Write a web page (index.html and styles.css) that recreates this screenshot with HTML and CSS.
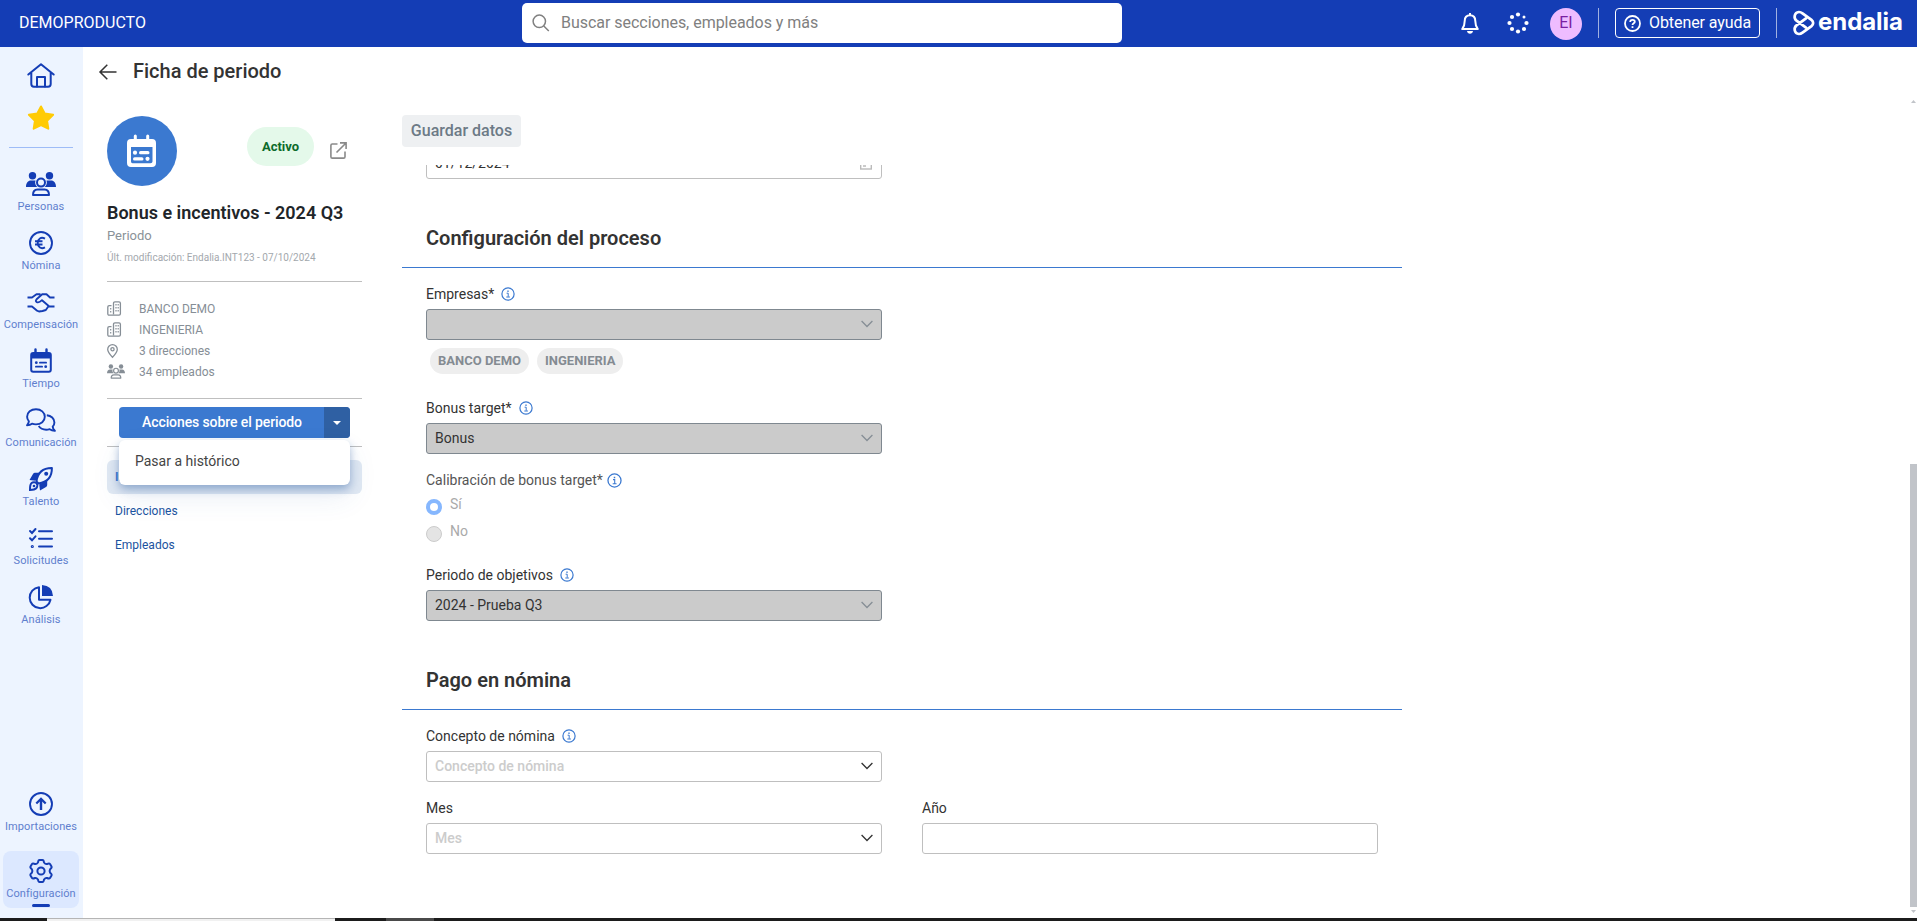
FILE: index.html
```html
<!DOCTYPE html>
<html lang="es">
<head>
<meta charset="utf-8">
<title>Ficha de periodo</title>
<link rel="stylesheet" href="styles.css">
</head>
<body>
<svg width="0" height="0" class="defs">
  <symbol id="people" viewBox="0 0 30 24">
    <circle cx="6.5" cy="3.8" r="3.7" fill="currentColor"/><circle cx="23.5" cy="3.8" r="3.7" fill="currentColor"/>
    <path d="M0 15c0-4 2-6.500 5-6.500h4.500c-1 3 .2 5 1.800 6.500zM30 15c0-4-2-6.500-5-6.500h-4.500c1 3-.2 5-1.800 6.500z" fill="currentColor"/>
    <circle cx="15" cy="10.600" r="4" fill="none" stroke="currentColor" stroke-width="2"/>
    <path d="M7 23c0-3.600 1.800-5.500 4.500-5.500h7c2.700 0 4.500 1.900 4.500 5.500z" fill="none" stroke="currentColor" stroke-width="2" stroke-linejoin="round"/>
  </symbol>
  <symbol id="building" viewBox="0 0 15 15">
    <path d="M6.500 13.200V2.200Q6.500.8 8 .8h4Q13.400.8 13.400 2.200v10.600q0 1.400-1.400 1.400H2.200Q.8 14.200.8 12.800V6q0-1.400 1.400-1.400h2.300" fill="none" stroke="currentColor" stroke-width="1.300"/>
    <path d="M9 3v9M11.200 3v9M3.700 7v5" stroke="currentColor" stroke-width="1.200" stroke-dasharray="1.500 1.500"/>
  </symbol>
  <symbol id="info" viewBox="0 0 14 14">
    <circle cx="7" cy="7" r="6.100" fill="none" stroke="currentColor" stroke-width="1.200"/>
    <path d="M5.600 6.200h1.600v3.500M5.300 10h3.600" fill="none" stroke="currentColor" stroke-width="1"/><rect x="6.300" y="3.500" width="1.400" height="1.400" fill="currentColor"/>
  </symbol>
  <symbol id="chevron" viewBox="0 0 12 8"><path d="M.6 1 6 6.500 11.400 1" fill="none" stroke="currentColor" stroke-width="1.300"/></symbol>
</svg>

<header class="topbar">
  <div class="tenant">DEMOPRODUCTO</div>
  <div class="search">
    <svg width="18" height="18" viewBox="0 0 18 18" fill="none" stroke="#808080" stroke-width="1.500"><circle cx="7.300" cy="7.300" r="6.200"/><path d="m11.800 12 5 5"/></svg>
    <span>Buscar secciones, empleados y más</span>
  </div>
  <div class="tools">
    <svg class="bell" width="18" height="21" viewBox="0 0 18 21" fill="none" stroke="#fff" stroke-width="2" stroke-linejoin="round"><path d="M9 2.300c-3.500 0-5.300 2.500-5.300 5.700C3.700 12 2.800 14 1.200 16h15.600c-1.600-2-2.500-4-2.500-8 0-3.200-1.800-5.700-5.300-5.700zM9 0v2.500"/><path d="M6 18h6c-.3 1.700-1.400 2.700-3 2.700S6.300 19.700 6 18z" fill="#fff" stroke="none"/></svg>
    <svg class="spin" width="22" height="22" viewBox="0 0 22 22" fill="#fff"><circle cx="11" cy="2.500" r="2.100"/><circle cx="17" cy="5" r="1.500"/><circle cx="19.500" cy="11" r="2.100"/><circle cx="17" cy="17" r="2.100"/><circle cx="11" cy="19.500" r="2.100"/><circle cx="5" cy="17" r="2.100"/><circle cx="2.500" cy="11" r="2.100"/><circle cx="5" cy="5" r="2.100"/></svg>
    <div class="avatar">EI</div>
    <i class="sep"></i>
    <div class="help">
      <svg width="17" height="17" viewBox="0 0 17 17" fill="none" stroke="#fff" stroke-width="1.800"><circle cx="8.500" cy="8.500" r="7.500"/><path d="M6.200 6.900c0-1.400 1-2.100 2.300-2.100s2.300.8 2.300 1.900c0 1.500-2.300 1.500-2.300 3.200"/><path d="M8.500 11.200V13"/></svg>
      <span>Obtener ayuda</span>
    </div>
    <i class="sep"></i>
    <div class="brand">
      <svg width="22" height="26" viewBox="0 0 22 26" fill="none" stroke="#fff" stroke-width="2.700" stroke-linejoin="round" stroke-linecap="round"><path d="M13 17.700 3.500 10.600C.3 8 1.300 2.300 5.800 2c1.500-.1 2.500.4 3.700 1.300l9 6.600c2.200 1.700 2.200 4.500 0 6.200l-9 6.600c-1.200.9-2.200 1.400-3.700 1.300-4.500-.3-5.500-6-2.300-8.600L13 8.300"/></svg>
      <span>endalia</span>
    </div>
  </div>
</header>

<div class="body">
  <nav class="rail">
    <svg class="home" width="28" height="25" viewBox="0 0 28 25" fill="none" stroke="currentColor" stroke-width="2" stroke-linejoin="round" stroke-linecap="round"><path d="M1.300 11.500 14 1.200l12.700 10.300M4.300 10v11q0 2.700 2.700 2.700h14q2.700 0 2.700-2.700V10"/><path d="M10 23.500V14h8v9.500"/></svg>
    <svg class="star" width="28" height="25" viewBox="0 0 28 25"><path d="M14 1.500 17.700 8.500l8.400 1.300-6 6 1.200 7.900L14 20l-7.300 3.700 1.200-7.900-6-6 8.400-1.300z" fill="#ffcb05" stroke="#ffcb05" stroke-width="2" stroke-linejoin="round"/></svg>
    <hr>
    <div class="nav"><svg width="30" height="24"><use href="#people"/></svg><span>Personas</span></div>
    <div class="nav"><svg width="24" height="24" viewBox="0 0 24 24" fill="none" stroke="currentColor" stroke-width="1.900"><circle cx="12" cy="12" r="11"/><path d="M16 7.700c-4-2.200-7.300.1-7.300 4.300s3.300 6.500 7.300 4.300M6 10.300h7.500M6 13.500h7.500"/></svg><span>Nómina</span></div>
    <div class="nav"><svg width="28" height="24" viewBox="0 0 28 24" fill="none" stroke="currentColor" stroke-width="1.900" stroke-linejoin="round"><path d="M.5 7.500H5l4.500-3.300h4M27.500 7.500H23L19.500 4.300h-4.300l-5.600 5q-1.600 1.800.2 2.800c2 1 3.300 0 5.200-1.900l7 6M.5 16.500H5l4.500 3.800 2.500 1.200 3.500-.5 3.300-1 2.500-3.500h6.200"/></svg><span>Compensación</span></div>
    <div class="nav"><svg width="22" height="24" viewBox="0 0 22 24"><path d="M5.500.5v4M16.500.5v4" stroke="currentColor" stroke-width="2.400" stroke-linecap="round"/><rect x="1.200" y="4" width="19.600" height="18.800" rx="2" fill="none" stroke="currentColor" stroke-width="2"/><path d="M1 4h20v5.500H1z" fill="currentColor"/><g fill="currentColor"><circle cx="6.300" cy="13.700" r="1.400"/><circle cx="15.700" cy="17.700" r="1.400"/><rect x="9" y="12.800" width="8" height="1.800" rx=".9"/><rect x="5" y="16.800" width="8" height="1.800" rx=".9"/></g></svg><span>Tiempo</span></div>
    <div class="nav"><svg width="30" height="24" viewBox="0 0 30 24" fill="none" stroke="currentColor" stroke-width="1.900" stroke-linejoin="round"><path d="M10 1.200c5 0 8.800 3.200 8.800 7.600s-3.800 7.600-8.800 7.600c-1.500 0-2.800-.2-4-.7-1.300 1-2.800 1.500-5 1.600 1.200-1.400 1.800-2.600 1.900-3.900C1.700 12 1.100 10.600 1.100 8.800 1.100 4.400 5 1.200 10 1.200z"/><path d="M20.800 7.200c4.300.4 7.600 3.300 7.600 7.200 0 1.600-.6 3-1.700 4.200.1 1.500.7 3 2.200 4.200-2.300.1-3.800-.6-5.200-1.600-1.200.4-2.300.6-3.500.6-3.300 0-6-1.400-7.500-3.700"/></svg><span>Comunicación</span></div>
    <div class="nav"><svg width="24" height="24" viewBox="0 0 24 24"><path d="M7.500 14.500C8.500 7 13 1 22.900 1.100 23 11 17 15.500 9.500 16.500z" fill="none" stroke="currentColor" stroke-width="2" stroke-linejoin="round"/><circle cx="17.200" cy="6.800" r="2" fill="currentColor"/><path d="M.5 13 4 7q.7-1.200 2-1.200h5L6.500 13.800zM11 23.500l6-3.500q1.200-.7 1.200-2v-5l-8 4.500z" fill="currentColor"/><path d="M1 23c-.1-3.600.2-5.800 1.600-7s4-.9 5 .3 1 3.700-.3 5S4.600 22.900 1 23z" fill="none" stroke="currentColor" stroke-width="2"/><circle cx="5" cy="19" r="1.300" fill="currentColor"/></svg><span>Talento</span></div>
    <div class="nav"><svg width="24" height="24" viewBox="0 0 24 24" fill="none" stroke="currentColor" stroke-width="2" stroke-linecap="round"><path d="M10 5.300h13M10 12.700h13M10 20.500h13"/><path d="m1 5 2 2 3.500-4M1 12.300l2 2 3.500-4"/><circle cx="3.300" cy="20.500" r=".6"/></svg><span>Solicitudes</span></div>
    <div class="nav"><svg width="24" height="24" viewBox="0 0 24 24"><path d="M10 2.200A10.500 10.500 0 1 0 21.500 14.700H10z" fill="none" stroke="currentColor" stroke-width="2" stroke-linejoin="round"/><path d="M13 0q10.500.5 11 11H13z" fill="currentColor"/></svg><span>Análisis</span></div>
    <div class="nav bottom"><svg width="24" height="24" viewBox="0 0 24 24" fill="none" stroke="currentColor" stroke-width="1.900"><circle cx="12" cy="12" r="11"/><path d="M12 18V7.500" stroke-width="2.400"/><path d="m7.300 11.500 4.700-4.600 4.700 4.600" stroke-width="2.200"/></svg><span>Importaciones</span></div>
    <div class="nav active"><svg width="24" height="24" viewBox="0 0 24 24" fill="none" stroke="currentColor" stroke-width="2" stroke-linejoin="round"><path d="M9 3.500Q9.300 1 10.500 1h3q1.200 0 1.500 2.500Q16.500 5.500 18 5q2.300-1 3 0l1.500 2.600q.6 1.100-1.400 2.600-1 1.800 0 3.600 2 1.500 1.400 2.600L21 19q-.7 1-3 0-1.500-.5-3 1.500-.3 2.500-1.500 2.500h-3Q9.300 23 9 20.500 7.500 18.500 6 19q-2.300 1-3 0l-1.500-2.600q-.6-1.100 1.400-2.600 1-1.800 0-3.600Q.9 8.700 1.500 7.600L3 5q.7-1 3 0 1.500.5 3-1.500z"/><circle cx="12" cy="12" r="3.600"/></svg><span>Configuración</span><i></i></div>
  </nav>

  <main class="main">
    <div class="title">
      <svg width="18" height="16" viewBox="0 0 18 16" fill="none" stroke="#333" stroke-width="1.500"><path d="M17.500 8H1M8.300.8 1 8l7.300 7.200"/></svg>
      <h1>Ficha de periodo</h1>
    </div>
    <div class="columns">
      <aside class="card">
        <div class="card-top">
          <div class="disc"><svg width="30" height="34" viewBox="0 0 30 34"><path d="M8.300 2v5M20.700 2v5" stroke="#fff" stroke-width="3" stroke-linecap="round"/><path d="M4 5h21q4 0 4 4v20q0 4-4 4H4q-4 0-4-4V9q0-4 4-4zm0 8v14.500q0 1.700 1.500 1.700h18q2 0 2-1.700V13z" fill="#fff" fill-rule="evenodd"/><g fill="#fff"><circle cx="8" cy="18.700" r="2.100"/><rect x="12" y="17.100" width="10.500" height="3.200" rx="1.600"/><circle cx="20.500" cy="24.800" r="2.100"/><rect x="6" y="23.300" width="10.500" height="3.200" rx="1.600"/></g></svg></div>
          <div class="badge">Activo</div>
          <svg class="ext" width="17" height="17" viewBox="0 0 17 17" fill="none" stroke="#8a8a8a" stroke-width="1.600"><path d="M7.500 2H2.300Q.9 2 .9 3.400v11.300q0 1.400 1.400 1.400h11.300q1.400 0 1.400-1.400V9.500M10 .9h6.100V7M16 1 6.500 10.500"/></svg>
        </div>
        <h2>Bonus e incentivos - 2024 Q3</h2>
        <p class="kind">Periodo</p>
        <p class="mod">Últ. modificación: Endalia.INT123 - 07/10/2024</p>
        <ul class="facts">
          <li><svg width="15" height="15"><use href="#building"/></svg><span>BANCO DEMO</span></li>
          <li><svg width="15" height="15"><use href="#building"/></svg><span>INGENIERIA</span></li>
          <li><svg width="11" height="14" viewBox="0 0 11 14" fill="none" stroke="currentColor" stroke-width="1.300"><path d="M5.500 13.200C3 10.500.7 8 .7 5.400a4.800 4.800 0 0 1 9.600 0c0 2.600-2.300 5.100-4.800 7.800z"/><circle cx="5.500" cy="5.200" r="1.600"/></svg><span>3 direcciones</span></li>
          <li><svg width="18" height="15"><use href="#people"/></svg><span>34 empleados</span></li>
        </ul>
        <div class="actions">
          <div class="split"><span>Acciones sobre el periodo</span><b><svg width="8" height="4" viewBox="0 0 8 4"><path d="M0 0h8L4 4z" fill="#fff"/></svg></b></div>
          <div class="menu">Pasar a histórico</div>
        </div>
        <div class="tabs">
          <a class="on">Información</a>
          <a>Direcciones</a>
          <a>Empleados</a>
        </div>
      </aside>

      <section class="content">
        <button class="save">Guardar datos</button>
        <div class="scroller">
          <div class="date"><span>01/12/2024</span><svg width="12" height="14" viewBox="0 0 12 14" fill="none" stroke="#bbb" stroke-width="1.400"><rect x=".7" y="2" width="10.600" height="11"/><path d="M.7 5h10.600M3 8h3M3 10h3"/></svg></div>
          <h3>Configuración del proceso</h3>
          <div class="fields">
            <label>Empresas*<svg width="14" height="14"><use href="#info"/></svg></label>
            <div class="select off"><span></span><svg width="12" height="8"><use href="#chevron"/></svg></div>
            <div class="chips"><span>BANCO DEMO</span><span>INGENIERIA</span></div>
            <label>Bonus target*<svg width="14" height="14"><use href="#info"/></svg></label>
            <div class="select off"><span>Bonus</span><svg width="12" height="8"><use href="#chevron"/></svg></div>
            <label class="soft">Calibración de bonus target*<svg width="15" height="15"><use href="#info"/></svg></label>
            <div class="radio checked"><i></i><span>Sí</span></div>
            <div class="radio"><i></i><span>No</span></div>
            <label class="after-radio">Periodo de objetivos<svg width="14" height="14"><use href="#info"/></svg></label>
            <div class="select off"><span>2024 - Prueba Q3</span><svg width="12" height="8"><use href="#chevron"/></svg></div>
          </div>
          <h3 class="pay">Pago en nómina</h3>
          <div class="fields">
            <label>Concepto de nómina<svg width="14" height="14"><use href="#info"/></svg></label>
            <div class="select"><span>Concepto de nómina</span><svg width="12" height="8"><use href="#chevron"/></svg></div>
          </div>
          <div class="pair">
            <div><label>Mes</label><div class="select"><span>Mes</span><svg width="12" height="8"><use href="#chevron"/></svg></div></div>
            <div><label>Año</label><div class="select"></div></div>
          </div>
        </div>
      </section>
      <div class="scrollbar">
        <svg width="5" height="3" viewBox="0 0 5 3"><path d="M0 3h5L2.500 0z" fill="#c1c4c9"/></svg>
        <i></i>
        <svg width="5" height="3" viewBox="0 0 5 3"><path d="M0 0h5L2.500 3z" fill="#c1c4c9"/></svg>
      </div>
    </div>
  </main>
</div>
<footer class="strip"><i class="s1"></i><i class="s2"></i><i class="s3"></i><i class="s4"></i></footer>
</body>
</html>
```
FILE: styles.css
```css
* { box-sizing: border-box; }
html, body { margin: 0; height: 921px; overflow: hidden; }
body { font-family: Roboto, sans-serif; font-size: 14px; color: #333; background: #fff; display: flex; flex-direction: column; }
h1, h2, h3, p, ul { margin: 0; padding: 0; }
svg { flex: none; display: block; overflow: visible; }
.defs { position: absolute; }

.topbar { height: 47px; flex: none; background: #143db5; display: grid; grid-template-columns: 522px 600px 1fr; color: #fff; }
.tenant { padding-left: 19px; line-height: 46px; font-size: 16px; }
.search { height: 40px; margin-top: 3px; border-radius: 5px; background: #fff; display: flex; align-items: center; padding-left: 10px; gap: 11px; color: #808080; font-size: 16px; letter-spacing: -.03px; }
.search span { padding-bottom: 2px; }
.tools { display: flex; justify-content: flex-end; align-items: center; padding-right: 13px; height: 46px; }
.bell { margin-right: 28px; }
.spin { margin-right: 21px; }
.avatar { width: 32px; height: 32px; border-radius: 50%; background: #eebcff; color: #7a1fa2; font-size: 16px; line-height: 30px; text-align: center; margin: 2px 16px 0 0; }
.sep { width: 1px; height: 30px; background: #a1b1e1; }
.help { width: 145px; height: 30px; border: 1px solid #fff; border-radius: 4px; margin: 0 16px; display: flex; align-items: center; gap: 8px; padding-left: 8px; font-size: 16px; white-space: nowrap; letter-spacing: -.08px; }
.help span { padding-bottom: 2px; }
.brand { display: flex; align-items: center; margin-left: 16px; gap: 3px; width: 111px; }
.brand span { font-family: Inter, sans-serif; font-weight: 700; font-size: 24px; line-height: 24px; letter-spacing: -.05px; padding-bottom: 3px; }

.body { flex: 1; min-height: 0; display: flex; }
.rail { width: 83px; flex: none; padding-right: 1px; background: #edf4ff; color: #143db5; display: flex; flex-direction: column; align-items: center; }
.rail hr { width: 64px; height: 1px; border: 0; background: #9ebcf7; margin: 17px 0 15px; }
.home { margin-top: 16px; }
.star { margin-top: 17px; }
.nav { width: 82px; height: 59px; flex: none; padding-top: 9px; display: flex; flex-direction: column; align-items: center; font-size: 11px; letter-spacing: .08px; line-height: 14px; }
.nav span { margin-top: 4px; color: #5f7fce; white-space: nowrap; }
.nav.bottom { margin-top: auto; }
.nav.active { width: 76px; height: 57px; margin: 9px 0 10px; padding-top: 8px; background: #dce8ff; border-radius: 8px; }
.nav.active i { width: 18px; height: 3px; border-radius: 2px; background: #143db5; margin-top: 3px; }

.main { flex: 1; display: flex; flex-direction: column; min-width: 0; }
.title { height: 49px; flex: none; display: flex; align-items: center; gap: 16px; padding-left: 16px; }
.title h1 { font-size: 20px; font-weight: 500; line-height: 24px; padding-bottom: 2px; }
.columns { flex: 1; min-height: 0; display: flex; }

.card { width: 255px; margin: 20px 0 0 24px; flex: none; }
.card-top { display: flex; height: 70px; }
.disc { width: 70px; height: 70px; border-radius: 50%; background: #3b79d0; display: flex; align-items: center; justify-content: center; }
.badge { width: 67px; height: 39px; margin: 11px 16px 0 70px; border-radius: 20px; background: #e4f9ea; color: #0b6b2a; font-size: 13px; font-weight: 700; line-height: 39px; text-align: center; }
.ext { margin-top: 26px; }
.card h2 { font-size: 18px; font-weight: 600; line-height: 24px; margin-top: 15px; white-space: nowrap; color: #212529; }
.kind { font-size: 13px; line-height: 20px; margin-top: 1px; color: #8a9298; }
.mod { font-size: 10px; line-height: 14px; margin-top: 5px; color: #a3a8ad; }
.facts { list-style: none; border: solid #bfbfbf; border-width: 1px 0; margin-top: 16px; height: 118px; padding-top: 16px; color: #868e96; font-size: 12px; }
.facts li { display: flex; height: 21px; align-items: center; }
.facts span { margin-left: auto; width: 223px; }
.actions { height: 48px; padding: 8px 12px 0; border-bottom: 1px solid #bfbfbf; position: relative; }
.split { display: flex; height: 31px; border-radius: 4px; overflow: hidden; background: #3b79d0; color: #fff; line-height: 30px; letter-spacing: -.1px; font-weight: 500; }
.split span { width: 205px; padding-left: 1px; text-align: center; }
.split b { flex: 1; background: #2f60a3; display: flex; align-items: center; justify-content: center; }
.menu { position: absolute; z-index: 2; left: 12px; top: 41px; width: 231px; height: 45px; padding-left: 16px; border-radius: 6px; background: #fff; color: #444; line-height: 43px; box-shadow: 0 4px 9px rgba(47,96,163,.42), 0 12px 28px rgba(47,96,163,.1); }
.tabs { display: flex; flex-direction: column; margin-top: 13px; }
.tabs a { height: 34px; line-height: 34px; padding-left: 8px; font-size: 12px; color: #1b53a0; border-radius: 6px; }
.tabs .on { background: #e1e9f3; color: #3b79d0; font-weight: 700; }

.content { width: 1000px; margin: 19px 0 0 40px; flex: none; display: flex; flex-direction: column; }
.save { width: 119px; height: 32px; flex: none; border: 0; border-radius: 4px; background: #eef0f2; color: #6c7a86; font: 500 16px Roboto, sans-serif; padding: 0 0 1px; }
.scroller { margin-top: 18px; flex: 1; min-height: 0; overflow: hidden; }
.date { width: 456px; height: 31px; margin: -17px 0 0 24px; border: 1px solid #bfbfbf; border-radius: 3px; display: flex; justify-content: space-between; align-items: center; padding: 0 9px 2px 8px; }
h3 { font-size: 20px; font-weight: 600; line-height: 24px; padding: 47px 24px 17px; border-bottom: 1px solid #3b79d0; height: 89px; }
.fields { width: 456px; margin: 16px 0 0 24px; }
label { display: flex; align-items: center; height: 20px; margin-bottom: 5px; }
label svg { margin-left: 7px; color: #3b79d0; }
.select { height: 31px; border: 1px solid #bfbfbf; border-radius: 3px; display: flex; align-items: center; justify-content: space-between; padding: 0 8px 1px; color: #ccc; font-weight: 500; margin-bottom: 16px; }
.select svg { color: #333; }
.select.off { border-color: #7f8890; background: #cbcbcb; color: #333; font-weight: 400; }
.select.off svg { color: #868e96; }
.chips { display: flex; gap: 8px; margin: -8px 0 24px 4px; }
.chips span { height: 26px; line-height: 26px; padding: 0 8px; border-radius: 13px; background: #eee; color: #848b92; font-size: 13px; font-weight: 700; }
.soft { color: #555; }
.soft svg { margin-left: 4px; }
.radio { display: flex; height: 27px; gap: 8px; padding-top: 4px; line-height: 16px; color: #aaa; }
.radio span { margin-top: -3px; }
.radio i { width: 16px; height: 16px; border-radius: 50%; background: #e4e4e4; border: 1px solid #ccc; }
.radio.checked i { border: 4px solid #86b7fe; background: #fff; }
.after-radio { margin-top: 16px; }
h3.pay { margin-top: -17px; height: 90px; padding-top: 48px; }
.pair { display: grid; grid-template-columns: 456px 456px; gap: 40px; margin-left: 24px; }

.scrollbar { margin: 4px 0 0 auto; width: 7px; display: flex; flex-direction: column; align-items: center; }
.scrollbar i { width: 7px; height: 443px; margin: 361px 0 3px; background: #c1c4c9; flex: none; }

.strip { height: 3px; flex: none; background: #1c1c1c; display: flex; }
.s1 { width: 47px; }
.s2 { width: 288px; background: #f1f1f1; border-top: 1px solid #b5b5b5; }
.s3 { width: 51px; }
.s4 { width: 48px; background: #4a4a4a; }
```
